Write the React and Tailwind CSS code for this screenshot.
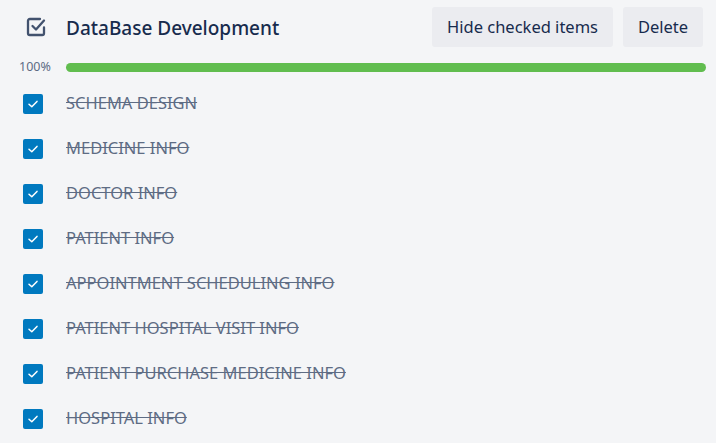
import React from "react";

const items = [
  "SCHEMA DESIGN",
  "MEDICINE INFO",
  "DOCTOR INFO",
  "PATIENT INFO",
  "APPOINTMENT SCHEDULING INFO",
  "PATIENT HOSPITAL VISIT INFO",
  "PATIENT PURCHASE MEDICINE INFO",
  "HOSPITAL INFO",
];

function ChecklistIcon() {
  return (
    <svg width="20" height="20" viewBox="0 0 20 20" fill="none">
      <path
        d="M14 2H3.8A1.8 1.8 0 0 0 2 3.8V16.2A1.8 1.8 0 0 0 3.8 18H16.2A1.8 1.8 0 0 0 18 16.2V10.5"
        stroke="#42526e"
        strokeWidth="2.3"
        strokeLinecap="round"
        strokeLinejoin="round"
      />
      <path
        d="M6.5 9L10 12.5L18 3.5"
        stroke="#42526e"
        strokeWidth="2.3"
        strokeLinecap="round"
        strokeLinejoin="round"
      />
    </svg>
  );
}

function CheckBox() {
  return (
    <div className="w-[20px] h-[20px] rounded-[2px] bg-[#0079bf] flex items-center justify-center">
      <svg width="12" height="12" viewBox="0 0 12 12" fill="none">
        <path d="M2 6.2L4.8 8.8L10 3.4" stroke="white" strokeWidth="1.5" strokeLinecap="round" strokeLinejoin="round" />
      </svg>
    </div>
  );
}

export default function App() {
  return (
    <div
      className="w-[716px] h-[443px] bg-[#f4f5f7] overflow-hidden"
      style={{ fontFamily: '"Noto Sans", "Open Sans", sans-serif' }}
    >
      <div className="flex items-center pt-[7px] h-[47px]">
        <div className="w-[66px] pl-[26px] flex items-center">
          <ChecklistIcon />
        </div>
        <div className="flex-1 pt-[3px] text-[19px] font-medium text-[#172b4d] leading-none">
          DataBase Development
        </div>
        <div className="flex gap-[10px] pr-[13px]">
          <button className="w-[181px] h-[40px] rounded-[3px] bg-[#ebecf0] text-[#172b4d] text-[16.5px] flex items-center justify-center">
            Hide checked items
          </button>
          <button className="w-[80px] h-[40px] rounded-[3px] bg-[#ebecf0] text-[#172b4d] text-[16.5px] flex items-center justify-center">
            Delete
          </button>
        </div>
      </div>
      <div className="flex items-center mt-[15px] h-[10px]">
        <div className="w-[66px] pl-[19px] text-[12.5px] text-[#5e6c84] leading-none">100%</div>
        <div className="flex-1 mr-[10px] h-[9px] rounded-full bg-[#61bd4f]" />
      </div>
      <div className="mt-[9px] flex flex-col">
        {items.map((t) => (
          <div key={t} className="h-[45px] flex items-center">
            <div className="w-[66px] pl-[23px]">
              <CheckBox />
            </div>
            <div className="text-[16.5px] text-[#5e6c84] line-through leading-none">{t}</div>
          </div>
        ))}
      </div>
    </div>
  );
}
